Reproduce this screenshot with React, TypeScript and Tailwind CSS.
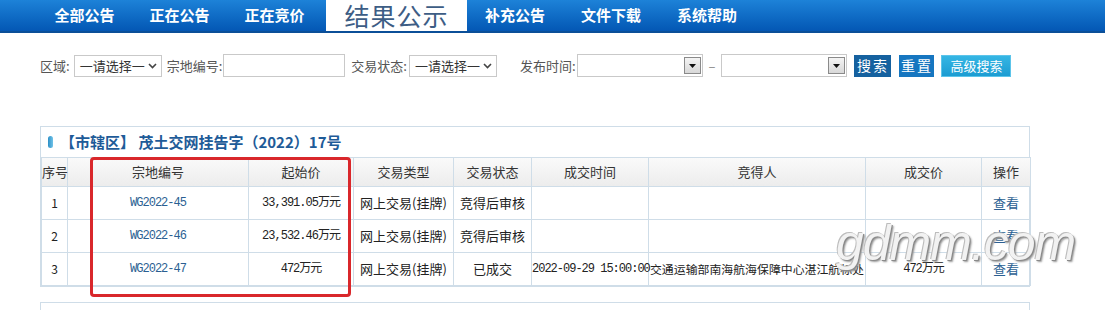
import React from "react";

const CJK = "font-['SimSun','Noto_Sans_CJK_SC',sans-serif]";
const MONO = "font-['Liberation_Mono','Noto_Sans_CJK_SC',monospace] tracking-[-1px]";

const navLeft = ["全部公告", "正在公告", "正在竞价"];
const navRight = ["补充公告", "文件下载", "系统帮助"];

type Row = {
  no: string;
  code: string;
  price: string;
  type: string;
  status: string;
  time: string;
  winner: string;
  deal: string;
};

const rows: Row[] = [
  { no: "1", code: "WG2022-45", price: "33,391.05万元", type: "网上交易(挂牌)", status: "竞得后审核", time: "", winner: "", deal: "" },
  { no: "2", code: "WG2022-46", price: "23,532.46万元", type: "网上交易(挂牌)", status: "竞得后审核", time: "", winner: "", deal: "" },
  {
    no: "3",
    code: "WG2022-47",
    price: "472万元",
    type: "网上交易(挂牌)",
    status: "已成交",
    time: "2022-09-29 15:00:00",
    winner: "交通运输部南海航海保障中心湛江航标处",
    deal: "472万元",
  },
];

const Chevron = () => (
  <svg width="9" height="6" viewBox="0 0 9 6" className="shrink-0">
    <path d="M1 1l3.5 3.5L8 1" fill="none" stroke="#444" strokeWidth="1.6" />
  </svg>
);

const Select = ({ w }: { w: string }) => (
  <div className={`flex h-[22px] ${w} items-center justify-between border border-[#c9c9c9] bg-white pl-[5px] pr-[4px] text-[13px] text-[#333]`}>
    <span>一请选择一</span>
    <Chevron />
  </div>
);

const DateBox = () => (
  <div className="flex h-[23px] w-[126px] items-center justify-end border border-[#c9c9c9] bg-white pr-[1px]">
    <div className="flex h-[17px] w-[17px] items-center justify-center border border-[#8a8a8a] bg-gradient-to-b from-[#f4f4f4] to-[#d8d8d8]">
      <svg width="7" height="4" viewBox="0 0 7 4">
        <path d="M0 0h7L3.5 4z" fill="#111" />
      </svg>
    </div>
  </div>
);

const cols = [
  "w-[26px]",
  "w-[181px]",
  "w-[105px]",
  "w-[100px]",
  "w-[78px]",
  "w-[117px]",
  "w-[217px]",
  "w-[116px]",
  "w-[49px]",
];

export default function App() {
  return (
    <div className={`relative h-[310px] w-[1105px] overflow-hidden bg-white ${CJK}`}>
      {/* nav */}
      <div className="flex h-[33px] border-b-2 border-[#0b4f98] bg-gradient-to-b from-[#1d82d8] to-[#0457b4] pl-[37px]">
        {navLeft.map((n) => (
          <div key={n} className="flex w-[95px] items-center justify-center text-[15px] font-bold text-white">
            {n}
          </div>
        ))}
        <div className="ml-[4px] flex w-[141px] items-center justify-center bg-white text-[25px] leading-none tracking-[1px] text-[#3d5d85]">
          结果公示
        </div>
        {navRight.map((n) => (
          <div key={n} className="flex w-[96px] items-center justify-center text-[15px] font-bold text-white">
            {n}
          </div>
        ))}
      </div>

      {/* filters */}
      <div className="mt-[21px] flex items-center pl-[40px] text-[13px] text-[#555]">
        <span className="mr-[4px]">区域:</span>
        <Select w="w-[88px]" />
        <span className="ml-[5px] mr-[1px]">宗地编号:</span>
        <div className="h-[23px] w-[122px] border border-[#c9c9c9] bg-white" />
        <span className="ml-[6px] mr-[2px]">交易状态:</span>
        <Select w="w-[88px]" />
        <span className="ml-[23px] mr-[1px]">发布时间:</span>
        <DateBox />
        <span className="mx-[6px] text-[#888]">–</span>
        <DateBox />
        <div className="ml-[7px] flex h-[22px] w-[37px] items-center justify-center whitespace-nowrap bg-[#15619f] text-[14px] tracking-[2px] text-white">
          搜索
        </div>
        <div className="ml-[8px] flex h-[22px] w-[35px] items-center justify-center whitespace-nowrap bg-[#1676c0] text-[14px] tracking-[2px] text-white">
          重置
        </div>
        <div className="ml-[7px] flex h-[22px] w-[70px] items-center justify-center whitespace-nowrap border border-[#5cc4ea] bg-gradient-to-b from-[#35b6e4] to-[#1b9cd2] text-[13px] text-white">
          高级搜索
        </div>
      </div>

      {/* result panel */}
      <div className="ml-[40px] mt-[49px] w-[990px] border border-[#cfdde8]">
        <div className="flex h-[30px] items-center pl-[7px] text-[15px] font-bold text-[#1e5b98]">
          <span className="mr-[7px] inline-block h-[12px] w-[5px] rounded-full bg-gradient-to-r from-[#2a8fc6] to-[#6fc3e8]" />
          <span>【市辖区】 茂土交网挂告字（2022）17号</span>
        </div>
        <table className="w-full table-fixed border-collapse text-[12px] text-[#222]">
          <thead>
            <tr className="h-[29px] bg-gradient-to-b from-[#fafafa] to-[#ececec]">
              {["序号", "宗地编号", "起始价", "交易类型", "交易状态", "成交时间", "竞得人", "成交价", "操作"].map((h, i) => (
                <th key={h} className={`${cols[i]} whitespace-nowrap border border-[#cfdde8] p-0 text-[13px] font-normal text-[#333]`}>
                  {h}
                </th>
              ))}
            </tr>
          </thead>
          <tbody>
            {rows.map((r) => (
              <tr key={r.no} className="h-[33px]">
                <td className="border border-[#cfdde8] p-0 text-center">{r.no}</td>
                <td className={`border border-[#cfdde8] p-0 text-center text-[#2b5f92] ${MONO}`}>{r.code}</td>
                <td className={`whitespace-nowrap border border-[#cfdde8] p-0 text-center ${MONO}`}>{r.price}</td>
                <td className="whitespace-nowrap border border-[#cfdde8] p-0 text-center text-[13px]">{r.type}</td>
                <td className="whitespace-nowrap border border-[#cfdde8] p-0 text-center text-[13px]">{r.status}</td>
                <td className={`whitespace-nowrap border border-[#cfdde8] p-0 text-center tracking-[-1.2px] ${MONO}`}>{r.time}</td>
                <td className="whitespace-nowrap border border-[#cfdde8] p-0 text-center text-[11.9px]">{r.winner}</td>
                <td className={`border border-[#cfdde8] p-0 text-center ${MONO}`}>{r.deal}</td>
                <td className="border border-[#cfdde8] p-0 text-center text-[13px] text-[#2b5f92]">查看</td>
              </tr>
            ))}
          </tbody>
        </table>
      </div>

      {/* next panel top */}
      <div className="ml-[40px] mt-[15px] h-[20px] w-[990px] border border-[#cfdde8]" />

      {/* red annotation */}
      <div className="absolute left-[90px] top-[157px] h-[140px] w-[261px] rounded-[4px] border-[3px] border-[#d9272b]" />

      {/* watermark */}
      <div className="pointer-events-none absolute left-[836px] top-[218px] font-['Liberation_Sans',sans-serif] text-[50px] italic leading-none tracking-[-1px] text-[#f2f2f2] [text-shadow:1px_1px_0_#8a8a8a,-1px_-1px_0_#bdbdbd,2px_2px_2px_#999]">
        gdmm.com
      </div>
    </div>
  );
}
